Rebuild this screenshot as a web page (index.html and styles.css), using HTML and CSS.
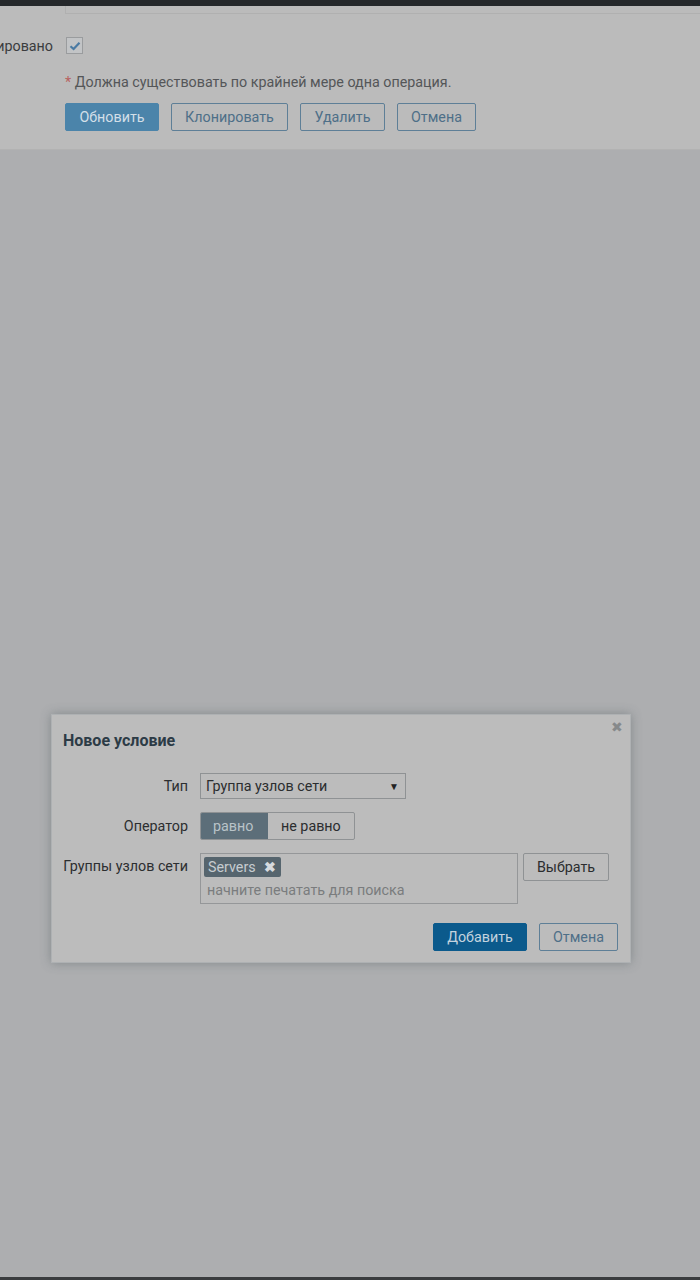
FILE: index.html
```html
<!DOCTYPE html>
<html lang="ru">
<head>
  <meta charset="UTF-8" />
  <meta name="viewport" content="width=device-width, initial-scale=1.0"/>
  <title>Действия</title>
  <link rel="stylesheet" href="styles.css">
</head>
<body>
  <div class="topbar"></div>

  <div class="form-panel">
    <div class="prev-field"></div>

    <div class="form-row status-row">
      <div class="row-label"><span>Активировано</span></div>
      <span class="checkbox">
        <svg width="12" height="10" viewBox="0 0 12 10"><path d="M1.5 5.2 L4.6 8 L10.5 1.8" fill="none" stroke="#4a7aa3" stroke-width="2.2"/></svg>
      </span>
    </div>

    <p class="warning"><span class="asterisk">*</span> Должна существовать по крайней мере одна операция.</p>

    <div class="actions">
      <button class="btn btn-main">Обновить</button>
      <button class="btn btn-alt">Клонировать</button>
      <button class="btn btn-alt">Удалить</button>
      <button class="btn btn-alt">Отмена</button>
    </div>
  </div>

  <div class="dialog">
    <span class="close">&#x2716;</span>
    <h2>Новое условие</h2>

    <div class="dlg-row">
      <label>Тип</label>
      <div class="select">Группа узлов сети <span class="arrow">&#9660;</span></div>
    </div>

    <div class="dlg-row">
      <label>Оператор</label>
      <div class="segmented">
        <span class="seg active">равно</span>
        <span class="seg">не равно</span>
      </div>
    </div>

    <div class="dlg-row top">
      <label>Группы узлов сети</label>
      <div class="multiselect">
        <span class="tag">Servers <b>&#x2716;</b></span>
        <span class="placeholder">начните печатать для поиска</span>
      </div>
      <button class="btn btn-grey">Выбрать</button>
    </div>

    <div class="dlg-footer">
      <button class="btn btn-primary">Добавить</button>
      <button class="btn btn-alt">Отмена</button>
    </div>
  </div>

  <div class="bottombar"></div>
</body>
</html>
```

FILE: styles.css
```css
body {
  margin: 0;
  height: 1280px;
  background: #adaeb0;
  font-family: Roboto, 'Liberation Sans', sans-serif;
  font-size: 14.3px;
  color: #2f3133;
  position: relative;
  overflow: hidden;
}

.topbar {
  height: 6px;
  background: #25282b;
}

.bottombar {
  position: absolute;
  left: 0;
  right: 0;
  bottom: 0;
  height: 3px;
  background: #3a3c3e;
}

.form-panel {
  height: 143px;
  background: #bbbbbb;
  border-bottom: 1px solid #b2b2b2;
}

.prev-field {
  margin-left: 65px;
  height: 7px;
  border-left: 1px solid #b0b0b0;
  border-bottom: 1px solid #b0b0b0;
}

.form-row {
  display: flex;
  align-items: center;
}

.status-row {
  margin-top: 23px;
  height: 17px;
}

.row-label {
  width: 53px;
  display: flex;
  justify-content: flex-end;
  overflow: hidden;
  white-space: nowrap;
  margin-right: 13px;
  color: #3a3c3e;
}

.checkbox {
  width: 15px;
  height: 15px;
  border: 1px solid #9a9c9e;
  background: #c2c4c6;
  display: flex;
  align-items: center;
  justify-content: center;
}

.warning {
  margin: 20px 0 0 65px;
  color: #545658;
  line-height: 16px;
}

.asterisk {
  color: #b8625f;
}

.actions {
  display: flex;
  gap: 12px;
  margin: 13px 0 0 65px;
}

.btn {
  font-family: inherit;
  font-size: 14.3px;
  height: 28px;
  padding: 0 10px;
  border-radius: 2px;
  cursor: pointer;
}

.btn-main {
  background: #4b84aa;
  border: 1px solid #4b84aa;
  color: #d3dfe8;
  width: 94px;
}

.btn-alt {
  background: transparent;
  border: 1px solid #5e7f97;
  color: #4e6f88;
}

.actions .btn-alt:nth-child(2) { width: 117px; }
.actions .btn-alt:nth-child(3) { width: 85px; }
.actions .btn-alt:nth-child(4) { width: 79px; }

/* dialog */
.dialog {
  position: absolute;
  left: 51px;
  top: 714px;
  width: 580px;
  height: 249px;
  box-sizing: border-box;
  padding: 16px 12px 12px 11px;
  background: #bcbcbc;
  border: 1px solid #aeb1b3;
  box-shadow: 0 0 10px rgba(80, 90, 95, 0.45);
}

.dialog h2 {
  margin: 0 0 22px 0;
  font-size: 16px;
  font-weight: bold;
  color: #2c3b46;
  line-height: 20px;
}

.close {
  position: absolute;
  right: 7px;
  top: 4px;
  font-size: 14px;
  color: #86898b;
}

.dlg-row {
  display: flex;
  align-items: center;
  gap: 12px;
  margin-bottom: 13px;
}

.dlg-row.top {
  align-items: flex-start;
}

.dlg-row label {
  width: 125px;
  text-align: right;
  color: #2c2e30;
  flex-shrink: 0;
}

.dlg-row.top label {
  margin-top: 5px;
}

.select {
  width: 206px;
  height: 26px;
  box-sizing: border-box;
  border: 1px solid #8f9294;
  padding: 0 6px 0 5px;
  display: flex;
  align-items: center;
  justify-content: space-between;
  color: #2b2d2f;
}

.arrow {
  font-size: 10px;
  color: #222;
}

.segmented {
  display: flex;
  height: 28px;
  box-sizing: border-box;
  border: 1px solid #8f9294;
  border-radius: 2px;
  overflow: hidden;
}

.seg {
  display: flex;
  align-items: center;
  padding: 0 13px;
  color: #2b2d2f;
}

.seg.active {
  background: #5c6e79;
  color: #b9c3c8;
  width: 42px;
  margin: -1px 0 -1px -1px;
}

.multiselect {
  width: 318px;
  height: 51px;
  box-sizing: border-box;
  border: 1px solid #959799;
  padding: 3px 3px 0 3px;
  display: flex;
  flex-direction: column;
  align-items: flex-start;
}

.tag {
  background: #56656e;
  color: #c6ccd0;
  height: 20px;
  line-height: 20px;
  padding: 0 5px 0 4px;
  border-radius: 2px;
  display: flex;
  gap: 8px;
  align-items: center;
}

.tag b {
  font-size: 14px;
  color: #d6dade;
}

.placeholder {
  color: #7a7c7e;
  margin: 5px 0 0 3px;
}

.btn-grey {
  height: 28px;
  width: 86px;
  margin-left: -7px;
  background: transparent;
  border: 1px solid #8f9294;
  color: #2b2d2f;
}

.dlg-footer {
  display: flex;
  justify-content: flex-end;
  gap: 12px;
  margin-top: 19px;
}

.btn-primary {
  width: 94px;
  background: #0b5a8c;
  border: 1px solid #0b5a8c;
  color: #c3d3df;
}

.dlg-footer .btn-alt {
  width: 79px;
}
```
